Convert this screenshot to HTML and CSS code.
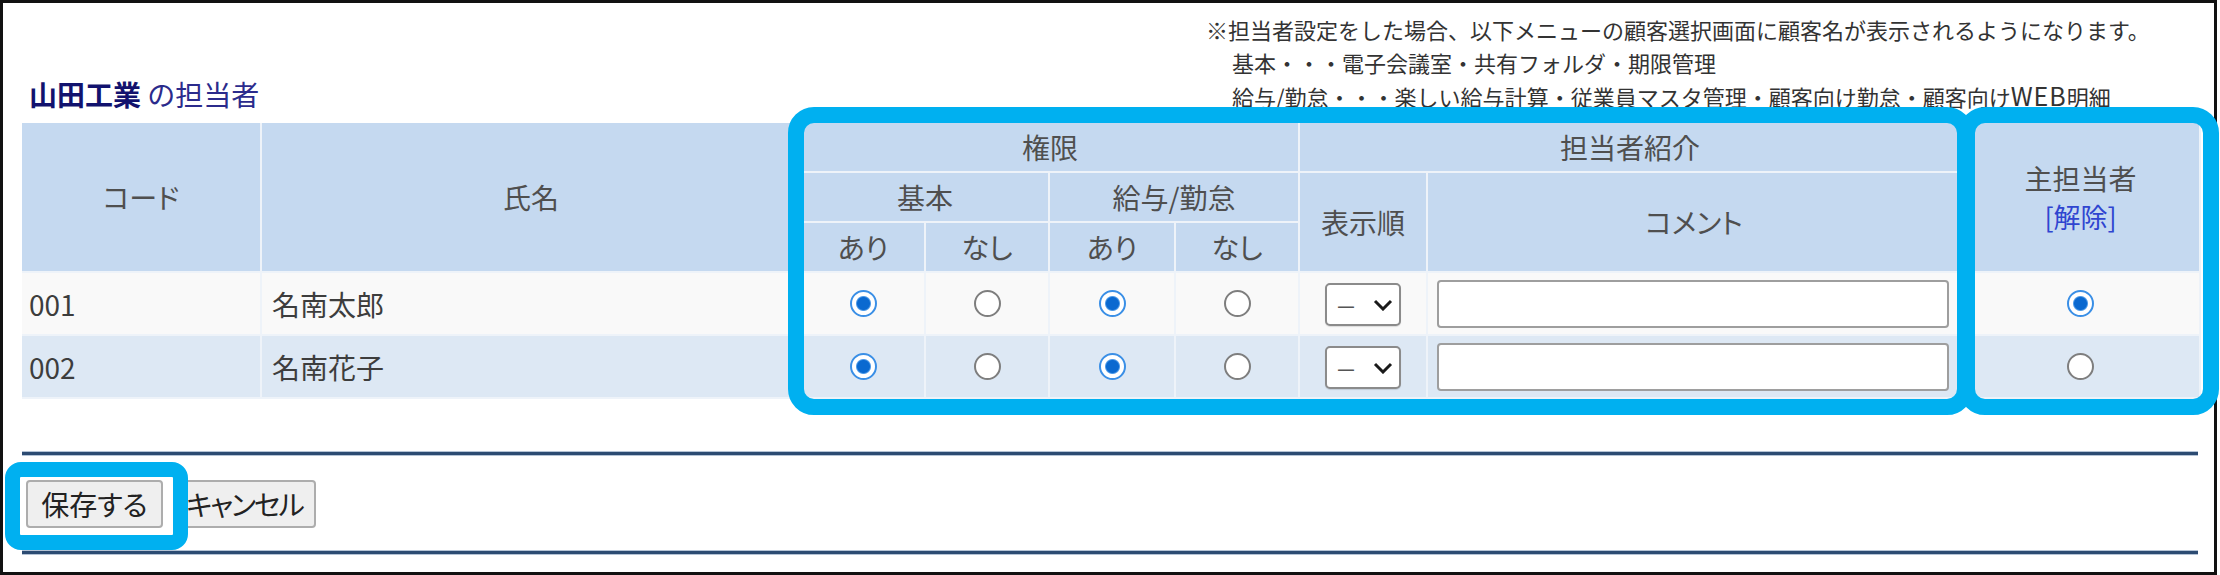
FILE: index.html
```html
<!DOCTYPE html>
<html lang="ja">
<head>
<meta charset="utf-8">
<title>担当者設定</title>
<link rel="stylesheet" href="styles.css">
</head>
<body>
<div class="frame">
  <div class="page">
    <div class="head">
      <h2 class="title"><b>山田工業</b> の担当者</h2>
      <div class="note">
        <p>※担当者設定をした場合、以下メニューの顧客選択画面に顧客名が表示されるようになります。</p>
        <p class="ind">基本・・・電子会議室・共有フォルダ・期限管理</p>
        <p class="ind">給与/勤怠・・・楽しい給与計算・従業員マスタ管理・顧客向け勤怠・顧客向け<span class="lat">WEB</span>明細</p>
      </div>
    </div>

    <table class="grid">
      <colgroup>
        <col class="c-code"><col class="c-name">
        <col class="c-r1"><col class="c-r2"><col class="c-r3"><col class="c-r4">
        <col class="c-ord"><col class="c-cmt"><col class="c-main">
      </colgroup>
      <thead>
        <tr class="hr">
          <th rowspan="3">コード</th>
          <th rowspan="3">氏名</th>
          <th colspan="4">権限</th>
          <th colspan="2">担当者紹介</th>
          <th rowspan="3" class="main">主担当者<br><a class="link">[解除]</a></th>
        </tr>
        <tr class="hr">
          <th colspan="2">基本</th>
          <th colspan="2">給与/勤怠</th>
          <th rowspan="2">表示順</th>
          <th rowspan="2">コメント</th>
        </tr>
        <tr class="hr">
          <th>あり</th><th>なし</th><th>あり</th><th>なし</th>
        </tr>
      </thead>
      <tbody>
        <tr class="dr r1">
          <td class="txt">001</td>
          <td class="txt nm">名南太郎</td>
          <td><input type="radio" class="rb" name="k1" checked></td>
          <td><input type="radio" class="rb" name="k1"></td>
          <td><input type="radio" class="rb" name="s1" checked></td>
          <td><input type="radio" class="rb" name="s1"></td>
          <td><span class="sel"><span class="dash">－</span><svg class="chev" width="20" height="12" viewBox="0 0 20 12"><polyline points="2,2 10,10 18,2" fill="none" stroke="#1a1a1a" stroke-width="3"/></svg></span></td>
          <td class="cmt"><input type="text" class="tx"></td>
          <td><input type="radio" class="rb" name="m" checked></td>
        </tr>
        <tr class="dr r2">
          <td class="txt">002</td>
          <td class="txt nm">名南花子</td>
          <td><input type="radio" class="rb" name="k2" checked></td>
          <td><input type="radio" class="rb" name="k2"></td>
          <td><input type="radio" class="rb" name="s2" checked></td>
          <td><input type="radio" class="rb" name="s2"></td>
          <td><span class="sel"><span class="dash">－</span><svg class="chev" width="20" height="12" viewBox="0 0 20 12"><polyline points="2,2 10,10 18,2" fill="none" stroke="#1a1a1a" stroke-width="3"/></svg></span></td>
          <td class="cmt"><input type="text" class="tx"></td>
          <td><input type="radio" class="rb" name="m"></td>
        </tr>
      </tbody>
    </table>

    <div class="rule rule-top"></div>
    <div class="buttons">
      <button class="btn btn-save">保存する</button>
      <button class="btn btn-cancel">キャンセル</button>
    </div>
    <div class="rule rule-bottom"></div>
  </div>

  <div class="hl hl-a"></div>
  <div class="hl hl-b"></div>
  <div class="hl hl-c"></div>
</div>
</body>
</html>
```

FILE: styles.css
```css
html, body {
  margin: 0;
  padding: 0;
  background: #fff;
}

body {
  font-family: "Noto Sans CJK JP", "Noto Sans", sans-serif;
  color: #333;
}

.frame {
  position: relative;
  width: 2217px;
  height: 575px;
  box-sizing: border-box;
  border: 3px solid #111;
}

.page {
  padding: 0 13px 0 19px;
}

/* ---------- header ---------- */
.head {
  display: flex;
  height: 120px;
}

.title {
  flex: 1;
  align-self: flex-end;
  margin: 0 0 12px 7px;
  font-size: 28px;
  line-height: 34px;
  font-weight: 400;
  color: #2b2b8c;
}

.title b {
  font-weight: 700;
  color: #12126e;
}

.note {
  flex: none;
  width: 995px;
  padding-top: 10px;
  font-size: 22px;
  line-height: 33px;
  color: #333;
}

.note p {
  margin: 0;
  white-space: nowrap;
}

.note .ind {
  padding-left: 26px;
}

.note .lat {
  font-size: 25px;
  letter-spacing: 1px;
}

/* ---------- table ---------- */
.grid {
  width: 2179px;
  table-layout: fixed;
  border-collapse: separate;
  border-spacing: 0;
  font-size: 28px;
  font-feature-settings: "palt";
}

.c-code { width: 240px; }
.c-name { width: 540px; }
.c-r1 { width: 124px; }
.c-r2 { width: 124px; }
.c-r3 { width: 126px; }
.c-r4 { width: 124px; }
.c-ord { width: 128px; }
.c-cmt { width: 534px; }
.c-main { width: 239px; }

.grid th,
.grid td {
  padding: 0;
  border-right: 2px solid #eef3f9;
  border-bottom: 2px solid #eef3f9;
  text-align: center;
  vertical-align: middle;
}

.grid th {
  background: #c5d9f0;
  color: #4f4f4f;
  font-weight: 400;
  line-height: 38px;
}

.grid tr.hr {
  height: 50px;
}

.grid tr.dr {
  height: 63px;
}

.grid tr.r1 td {
  background: #f9f9f9;
}

.grid tr.r2 td {
  background: #dde8f4;
}

.grid td.txt {
  text-align: left;
  padding-left: 7px;
  color: #3d3d3d;
}

.grid td.nm {
  padding-left: 10px;
}

.link {
  color: #2f45d0;
  text-decoration: none;
  font-size: 27px;
}

/* radio */
.rb {
  appearance: none;
  -webkit-appearance: none;
  display: block;
  margin: 0 auto;
  width: 27px;
  height: 27px;
  box-sizing: border-box;
  border: 2px solid #7e7e7e;
  border-radius: 50%;
  background: #fff;
}

.rb:checked {
  border-color: #3a8fe6;
  background: radial-gradient(circle at center, #0a69d0 0, #0a69d0 6px, #4d9ae8 7px, #fff 8px);
}

/* select */
.sel {
  display: inline-flex;
  align-items: center;
  justify-content: space-between;
  width: 76px;
  height: 43px;
  box-sizing: border-box;
  padding: 0 6px 0 8px;
  border: 2px solid #8b8b8b;
  border-radius: 5px;
  background: #fff;
  box-shadow: 0 1px 1px rgba(0, 0, 0, 0.12);
  vertical-align: middle;
}

.dash {
  font-size: 22px;
  line-height: 1;
  color: #555;
}

.chev {
  display: block;
}

/* text input */
.grid td.cmt {
  text-align: left;
  padding-left: 9px;
}

.tx {
  display: block;
  width: 512px;
  height: 48px;
  box-sizing: border-box;
  margin: 0;
  border: 2px solid #9e9e9e;
  border-radius: 4px;
  background: #fff;
}

/* ---------- rules & buttons ---------- */
.rule {
  height: 3px;
  margin-right: 3px;
  background: #2c4b72;
  box-shadow: 0 1px 0 #b4c3d5, 0 -1px 0 #b4c3d5;
}

.rule-top {
  margin-top: 53px;
}

.buttons {
  display: flex;
  gap: 10px;
  padding: 25px 0 0 4px;
  height: 48px;
}

.rule-bottom {
  margin-top: 23px;
}

.btn {
  height: 48px;
  box-sizing: border-box;
  padding: 0;
  margin: 0;
  border: 2px solid #adadad;
  border-radius: 4px;
  background: #efefef;
  color: #222;
  text-align: center;
  white-space: nowrap;
  font-family: "Noto Sans CJK JP", "Noto Sans", sans-serif;
  font-size: 28px;
  line-height: 1;
  font-feature-settings: "palt";
}

.btn-save {
  width: 137px;
}

.btn-cancel {
  width: 143px;
  letter-spacing: -2px;
}

/* ---------- annotation highlights ---------- */
.hl {
  position: absolute;
  box-sizing: border-box;
  border: 16px solid #00b0f0;
  pointer-events: none;
}

.hl-a {
  left: 785px;
  top: 104px;
  width: 1185px;
  height: 308px;
  border-radius: 26px;
}

.hl-b {
  left: 1956px;
  top: 104px;
  width: 260px;
  height: 308px;
  border-radius: 26px;
}

.hl-c {
  left: 2px;
  top: 459px;
  width: 183px;
  height: 88px;
  border-width: 15px;
  border-radius: 16px;
}
```
